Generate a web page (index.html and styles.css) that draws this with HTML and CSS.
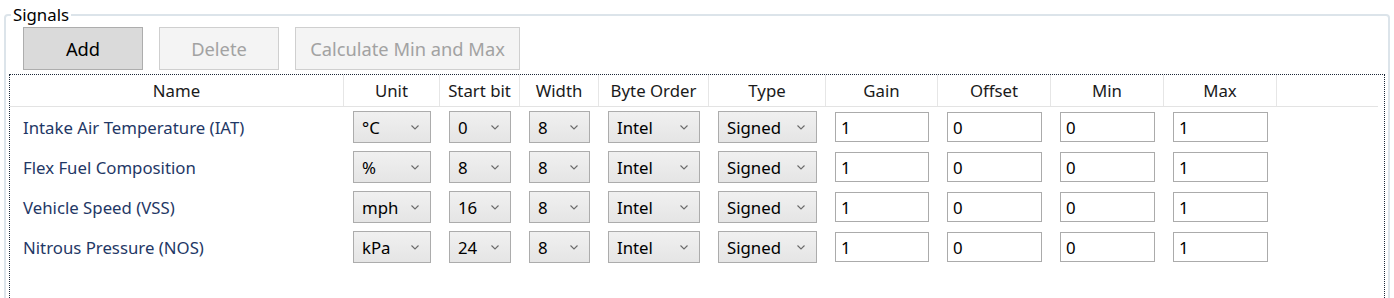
FILE: index.html
```html
<!DOCTYPE html>
<html lang="en">
<head>
  <meta charset="UTF-8">
  <title>Signals</title>
  <link rel="stylesheet" href="styles.css">
</head>
<body>
  <fieldset class="group">
    <legend>Signals</legend>
    <div class="toolbar">
      <button class="btn pressed">Add</button>
      <button class="btn" disabled>Delete</button>
      <button class="btn wide" disabled>Calculate Min and Max</button>
    </div>

    <div class="grid">
      <div class="row head">
        <div class="hc">Name</div>
        <div class="hc">Unit</div>
        <div class="hc">Start bit</div>
        <div class="hc">Width</div>
        <div class="hc">Byte Order</div>
        <div class="hc">Type</div>
        <div class="hc">Gain</div>
        <div class="hc">Offset</div>
        <div class="hc">Min</div>
        <div class="hc">Max</div>
        <div class="hc filler"></div>
      </div>

      <div class="row">
        <div class="name">Intake Air Temperature (IAT)</div>
        <div class="cell"><div class="combo"><span>°C</span><svg viewBox="0 0 8 5"><polyline points="0.5,0.5 4,4 7.5,0.5"/></svg></div></div>
        <div class="cell"><div class="combo"><span>0</span><svg viewBox="0 0 8 5"><polyline points="0.5,0.5 4,4 7.5,0.5"/></svg></div></div>
        <div class="cell"><div class="combo"><span>8</span><svg viewBox="0 0 8 5"><polyline points="0.5,0.5 4,4 7.5,0.5"/></svg></div></div>
        <div class="cell"><div class="combo"><span>Intel</span><svg viewBox="0 0 8 5"><polyline points="0.5,0.5 4,4 7.5,0.5"/></svg></div></div>
        <div class="cell"><div class="combo"><span>Signed</span><svg viewBox="0 0 8 5"><polyline points="0.5,0.5 4,4 7.5,0.5"/></svg></div></div>
        <div class="cell"><input class="field" value="1"></div>
        <div class="cell"><input class="field" value="0"></div>
        <div class="cell"><input class="field" value="0"></div>
        <div class="cell"><input class="field" value="1"></div>
        <div></div>
      </div>

      <div class="row">
        <div class="name">Flex Fuel Composition</div>
        <div class="cell"><div class="combo"><span>%</span><svg viewBox="0 0 8 5"><polyline points="0.5,0.5 4,4 7.5,0.5"/></svg></div></div>
        <div class="cell"><div class="combo"><span>8</span><svg viewBox="0 0 8 5"><polyline points="0.5,0.5 4,4 7.5,0.5"/></svg></div></div>
        <div class="cell"><div class="combo"><span>8</span><svg viewBox="0 0 8 5"><polyline points="0.5,0.5 4,4 7.5,0.5"/></svg></div></div>
        <div class="cell"><div class="combo"><span>Intel</span><svg viewBox="0 0 8 5"><polyline points="0.5,0.5 4,4 7.5,0.5"/></svg></div></div>
        <div class="cell"><div class="combo"><span>Signed</span><svg viewBox="0 0 8 5"><polyline points="0.5,0.5 4,4 7.5,0.5"/></svg></div></div>
        <div class="cell"><input class="field" value="1"></div>
        <div class="cell"><input class="field" value="0"></div>
        <div class="cell"><input class="field" value="0"></div>
        <div class="cell"><input class="field" value="1"></div>
        <div></div>
      </div>

      <div class="row">
        <div class="name">Vehicle Speed (VSS)</div>
        <div class="cell"><div class="combo"><span>mph</span><svg viewBox="0 0 8 5"><polyline points="0.5,0.5 4,4 7.5,0.5"/></svg></div></div>
        <div class="cell"><div class="combo"><span>16</span><svg viewBox="0 0 8 5"><polyline points="0.5,0.5 4,4 7.5,0.5"/></svg></div></div>
        <div class="cell"><div class="combo"><span>8</span><svg viewBox="0 0 8 5"><polyline points="0.5,0.5 4,4 7.5,0.5"/></svg></div></div>
        <div class="cell"><div class="combo"><span>Intel</span><svg viewBox="0 0 8 5"><polyline points="0.5,0.5 4,4 7.5,0.5"/></svg></div></div>
        <div class="cell"><div class="combo"><span>Signed</span><svg viewBox="0 0 8 5"><polyline points="0.5,0.5 4,4 7.5,0.5"/></svg></div></div>
        <div class="cell"><input class="field" value="1"></div>
        <div class="cell"><input class="field" value="0"></div>
        <div class="cell"><input class="field" value="0"></div>
        <div class="cell"><input class="field" value="1"></div>
        <div></div>
      </div>

      <div class="row">
        <div class="name">Nitrous Pressure (NOS)</div>
        <div class="cell"><div class="combo"><span>kPa</span><svg viewBox="0 0 8 5"><polyline points="0.5,0.5 4,4 7.5,0.5"/></svg></div></div>
        <div class="cell"><div class="combo"><span>24</span><svg viewBox="0 0 8 5"><polyline points="0.5,0.5 4,4 7.5,0.5"/></svg></div></div>
        <div class="cell"><div class="combo"><span>8</span><svg viewBox="0 0 8 5"><polyline points="0.5,0.5 4,4 7.5,0.5"/></svg></div></div>
        <div class="cell"><div class="combo"><span>Intel</span><svg viewBox="0 0 8 5"><polyline points="0.5,0.5 4,4 7.5,0.5"/></svg></div></div>
        <div class="cell"><div class="combo"><span>Signed</span><svg viewBox="0 0 8 5"><polyline points="0.5,0.5 4,4 7.5,0.5"/></svg></div></div>
        <div class="cell"><input class="field" value="1"></div>
        <div class="cell"><input class="field" value="0"></div>
        <div class="cell"><input class="field" value="0"></div>
        <div class="cell"><input class="field" value="1"></div>
        <div></div>
      </div>
    </div>
  </fieldset>
</body>
</html>
```

FILE: styles.css
```css
html, body {
  margin: 0;
  padding: 0;
  height: 298px;
  overflow: hidden;
  background: #fff;
}
body {
  font-family: "Noto Sans", "Open Sans", sans-serif;
  font-size: 16.8px;
  color: #000;
}
.group {
  margin: 4px 4px 0;
  padding: 0 3px;
  border: 2px solid #dce4ea;
  border-radius: 4px;
  height: 300px;
}
.group legend {
  margin-left: 2px;
  padding: 0 2px;
  line-height: 22px;
  font-size: 16.8px;
}
.toolbar {
  display: flex;
  gap: 16px;
  margin: 1px 0 4px 14px;
}
.btn {
  height: 43px;
  width: 120px;
  font-family: inherit;
  font-size: 18.3px;
  color: #000;
  background: #f4f4f4;
  border: 1px solid #cfcfcf;
  border-radius: 0;
}
.btn.pressed {
  background: #dadada;
  border-color: #adadad;
}
.btn:disabled {
  color: #a2a2a2;
}
.btn.wide {
  width: 225px;
}
.grid {
  border: 1px dotted #1c2838;
  height: 260px;
}
.row {
  display: grid;
  grid-template-columns: 334px 96px 80px 79px 110px 117px 112px 113px 113px 113px 1fr;
  height: 40px;
}
.row.head {
  height: 31px;
  border-bottom: 1px solid #e3e3e3;
  margin-right: 6px;
}
.hc {
  display: flex;
  align-items: center;
  justify-content: center;
  border-right: 1px solid #e6e6e6;
  color: #1a1a1a;
}
.hc.filler {
  border-right: none;
}
.name {
  display: flex;
  align-items: center;
  padding-left: 13px;
  color: #1f3866;
}
.cell {
  display: flex;
  align-items: center;
  padding: 0 9px;
}
.combo {
  flex: 1;
  height: 32px;
  box-sizing: border-box;
  display: flex;
  align-items: center;
  justify-content: space-between;
  padding: 0 11px 0 8px;
  background: linear-gradient(#f0f0f0, #e5e5e5);
  border: 1px solid #acacac;
}
.combo svg {
  width: 8px;
  height: 5px;
  fill: none;
  stroke: #6a6a6a;
  stroke-width: 1.1;
}
.field {
  flex: 1;
  min-width: 0;
  height: 30px;
  box-sizing: border-box;
  padding: 0 5px;
  font-family: inherit;
  font-size: 16.8px;
  color: #000;
  background: #fff;
  border: 1px solid #ababab;
  border-radius: 0;
  outline: none;
}
```
